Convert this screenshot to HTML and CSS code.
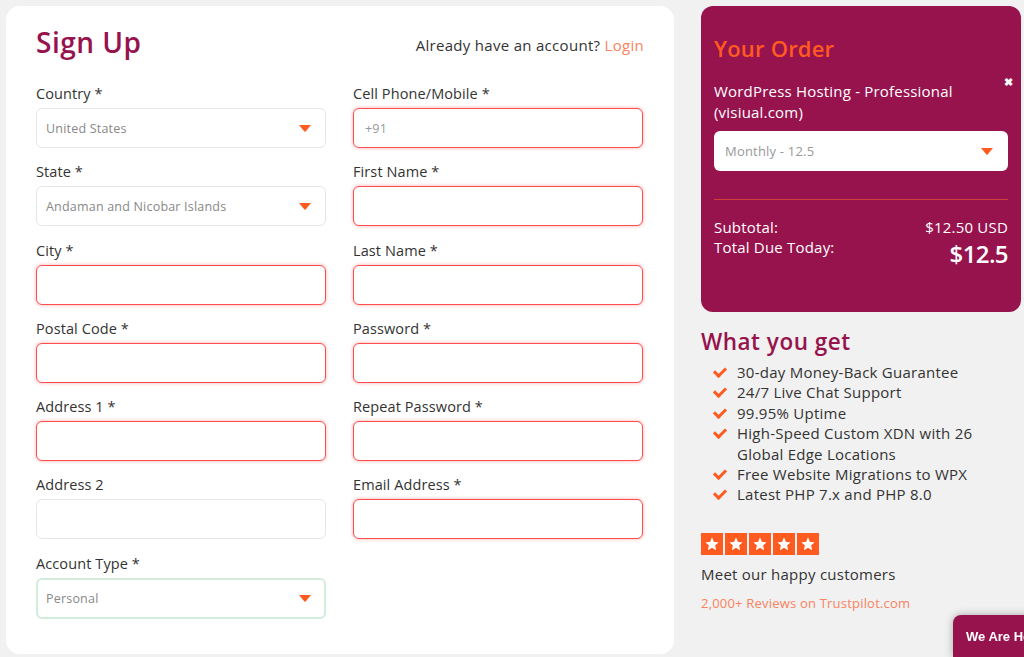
FILE: index.html
```html
<!DOCTYPE html>
<html lang="en">
<head>
    <meta charset="UTF-8">
    <meta name="viewport" content="width=device-width, initial-scale=1.0">
    <title>Sign Up - Checkout</title>
    <link rel="stylesheet" href="styles.css">
</head>
<body>
    <div class="page">
        <div class="signup-card">
            <div class="signup-head">
                <h1 class="signup-title">Sign Up</h1>
                <p class="have-account">Already have an account? <a href="#">Login</a></p>
            </div>

            <form class="form-grid">
                <div class="field">
                    <label>Country *</label>
                    <div class="select">
                        <select><option>United States</option></select>
                        <svg class="arrow" width="12" height="7" viewBox="0 0 12 7"><path d="M0 0h12L6.6 6.4a.8.8 0 0 1-1.2 0z" fill="#ff5a1f"/></svg>
                    </div>
                </div>
                <div class="field">
                    <label>Cell Phone/Mobile *</label>
                    <input class="error" type="text" placeholder="+91">
                </div>

                <div class="field">
                    <label>State *</label>
                    <div class="select">
                        <select><option>Andaman and Nicobar Islands</option></select>
                        <svg class="arrow" width="12" height="7" viewBox="0 0 12 7"><path d="M0 0h12L6.6 6.4a.8.8 0 0 1-1.2 0z" fill="#ff5a1f"/></svg>
                    </div>
                </div>
                <div class="field">
                    <label>First Name *</label>
                    <input class="error" type="text">
                </div>

                <div class="field">
                    <label>City *</label>
                    <input class="error" type="text">
                </div>
                <div class="field">
                    <label>Last Name *</label>
                    <input class="error" type="text">
                </div>

                <div class="field">
                    <label>Postal Code *</label>
                    <input class="error" type="text">
                </div>
                <div class="field">
                    <label>Password *</label>
                    <input class="error" type="password">
                </div>

                <div class="field">
                    <label>Address 1 *</label>
                    <input class="error" type="text">
                </div>
                <div class="field">
                    <label>Repeat Password *</label>
                    <input class="error" type="password">
                </div>

                <div class="field">
                    <label>Address 2</label>
                    <input type="text">
                </div>
                <div class="field">
                    <label>Email Address *</label>
                    <input class="error" type="email">
                </div>

                <div class="field">
                    <label>Account Type *</label>
                    <div class="select valid">
                        <select><option>Personal</option></select>
                        <svg class="arrow" width="12" height="7" viewBox="0 0 12 7"><path d="M0 0h12L6.6 6.4a.8.8 0 0 1-1.2 0z" fill="#ff5a1f"/></svg>
                    </div>
                </div>
            </form>
        </div>

        <div class="sidebar">
            <div class="order-box">
                <h2 class="order-title">Your Order</h2>
                <span class="remove">&#10006;</span>
                <p class="product-name">WordPress Hosting - Professional (visiual.com)</p>
                <div class="select">
                    <select><option>Monthly - 12.5</option></select>
                    <svg class="arrow" width="12" height="7" viewBox="0 0 12 7"><path d="M0 0h12L6.6 6.4a.8.8 0 0 1-1.2 0z" fill="#ff5a1f"/></svg>
                </div>
                <div class="totals">
                    <div class="total-row">
                        <span>Subtotal:</span>
                        <span>$12.50 USD</span>
                    </div>
                    <div class="total-row">
                        <span>Total Due Today:</span>
                        <span class="total-big">$12.5</span>
                    </div>
                </div>
            </div>

            <h2 class="get-title">What you get</h2>
            <ul class="get-list">
                <li>30-day Money-Back Guarantee</li>
                <li>24/7 Live Chat Support</li>
                <li>99.95% Uptime</li>
                <li>High-Speed Custom XDN with 26 Global Edge Locations</li>
                <li>Free Website Migrations to WPX</li>
                <li>Latest PHP 7.x and PHP 8.0</li>
            </ul>

            <div class="stars">
                <span class="star"><svg width="16" height="16" viewBox="0 0 24 24"><path d="M12 2l2.9 6.9 7.1.6-5.4 4.7 1.7 7.3L12 17.6 5.7 21.5l1.7-7.3L2 9.5l7.1-.6z" fill="#fff"/></svg></span>
                <span class="star"><svg width="16" height="16" viewBox="0 0 24 24"><path d="M12 2l2.9 6.9 7.1.6-5.4 4.7 1.7 7.3L12 17.6 5.7 21.5l1.7-7.3L2 9.5l7.1-.6z" fill="#fff"/></svg></span>
                <span class="star"><svg width="16" height="16" viewBox="0 0 24 24"><path d="M12 2l2.9 6.9 7.1.6-5.4 4.7 1.7 7.3L12 17.6 5.7 21.5l1.7-7.3L2 9.5l7.1-.6z" fill="#fff"/></svg></span>
                <span class="star"><svg width="16" height="16" viewBox="0 0 24 24"><path d="M12 2l2.9 6.9 7.1.6-5.4 4.7 1.7 7.3L12 17.6 5.7 21.5l1.7-7.3L2 9.5l7.1-.6z" fill="#fff"/></svg></span>
                <span class="star"><svg width="16" height="16" viewBox="0 0 24 24"><path d="M12 2l2.9 6.9 7.1.6-5.4 4.7 1.7 7.3L12 17.6 5.7 21.5l1.7-7.3L2 9.5l7.1-.6z" fill="#fff"/></svg></span>
            </div>
            <p class="happy">Meet our happy customers</p>
            <a class="reviews" href="#">2,000+ Reviews on Trustpilot.com</a>
        </div>
    </div>

    <div class="help-badge">We Are Here!</div>
</body>
</html>
```

FILE: styles.css
```css
body {
    margin: 0;
    background-color: #f1f1f1;
    font-family: "Open Sans", sans-serif;
    color: #333;
}

.page {
    display: flex;
    gap: 27px;
    padding: 6px 3px 0 6px;
}

/* sign up card */
.signup-card {
    width: 668px;
    height: 648px;
    box-sizing: border-box;
    background: #fff;
    border-radius: 14px;
    padding: 19px 30px 0;
}

.signup-head {
    display: flex;
    justify-content: space-between;
    align-items: center;
    height: 34px;
    margin-bottom: 25px;
}

.signup-title {
    margin: 0;
    font-size: 28px;
    font-weight: 600;
    line-height: 34px;
    letter-spacing: 0.5px;
    color: #96134d;
}

.have-account {
    margin: 6px 0 0;
    font-size: 15px;
    letter-spacing: 0.3px;
}

.have-account a {
    color: #f7835f;
    text-decoration: none;
}

.form-grid {
    display: grid;
    grid-template-columns: 290px 290px;
    column-gap: 27px;
    row-gap: 14.3px;
}

.field label {
    display: block;
    font-size: 14.5px;
    line-height: 20px;
    letter-spacing: 0.1px;
    margin-bottom: 4px;
}

.field input,
.select select {
    display: block;
    width: 100%;
    height: 40px;
    box-sizing: border-box;
    border: 1px solid #e6e6e6;
    border-radius: 6px;
    padding: 0 11px;
    font-family: inherit;
    font-size: 12.5px;
    letter-spacing: 0.2px;
    color: #888;
    background: #fff;
    outline: none;
}

.field input::placeholder {
    color: #999;
}

.field input.error {
    border: 1.5px solid #ff4d4d;
    box-shadow: 0 0 3px 1px rgba(255, 77, 77, 0.28);
}

.select {
    position: relative;
}

.select select {
    appearance: none;
    -webkit-appearance: none;
    padding-left: 9px;
}

.select .arrow {
    position: absolute;
    right: 15px;
    top: 17px;
}

.select.valid select {
    height: 41px;
    border: 2px solid #d3ebd9;
    padding-left: 8px;
}

/* sidebar */
.sidebar {
    width: 320px;
}

.order-box {
    position: relative;
    background: #97134e;
    border-radius: 12px;
    height: 306px;
    box-sizing: border-box;
    padding: 28px 13px 0;
    color: #fff;
}

.order-title {
    margin: 0;
    font-size: 22px;
    font-weight: 600;
    line-height: 28px;
    letter-spacing: 0.2px;
    color: #ff5a1f;
}

.remove {
    position: absolute;
    top: 68px;
    right: 8px;
    font-size: 11px;
    font-weight: bold;
}

.product-name {
    margin: 19px 0 8px;
    font-size: 15px;
    line-height: 21px;
    letter-spacing: 0.2px;
}

.order-box .select select {
    border: none;
    color: #999;
    font-size: 13px;
    padding-left: 11px;
}

.totals {
    margin-top: 28px;
    border-top: 1px solid #d0403f;
    padding-top: 17px;
    font-size: 15px;
    letter-spacing: 0.2px;
}

.total-row {
    display: flex;
    justify-content: space-between;
    align-items: flex-start;
    line-height: 20px;
}

.total-big {
    font-size: 24px;
    font-weight: 600;
    line-height: 30px;
    letter-spacing: -0.6px;
    word-spacing: -2px;
    margin-top: 2px;
}

.get-title {
    margin: 16px 0 6px;
    font-size: 22.5px;
    font-weight: 600;
    line-height: 28px;
    letter-spacing: 0.5px;
    color: #96134d;
}

.get-list {
    list-style: none;
    margin: 0;
    padding: 0 0 0 36px;
    font-size: 15px;
    line-height: 20.4px;
    letter-spacing: 0.25px;
}

.get-list li {
    position: relative;
}

.get-list li::before {
    content: "";
    position: absolute;
    left: -23px;
    top: 5px;
    width: 9px;
    height: 5px;
    border-left: 3px solid #ff5a1f;
    border-bottom: 3px solid #ff5a1f;
    transform: rotate(-45deg);
}

.stars {
    display: flex;
    gap: 2px;
    margin-top: 28px;
}

.star {
    width: 22px;
    height: 22px;
    background: #ff5a1f;
    display: flex;
    align-items: center;
    justify-content: center;
}

.happy {
    margin: 9px 0 0;
    font-size: 15px;
    line-height: 20px;
    letter-spacing: 0.25px;
}

.reviews {
    display: block;
    margin-top: 10px;
    font-size: 13px;
    line-height: 18px;
    letter-spacing: 0.2px;
    color: #f7835f;
    text-decoration: none;
}

.help-badge {
    position: fixed;
    left: 953px;
    bottom: 0;
    height: 42px;
    line-height: 44px;
    padding: 0 13px;
    background: #97134e;
    border-radius: 8px 8px 0 0;
    box-shadow: 0 0 8px rgba(0, 0, 0, 0.3);
    color: #fff;
    font-family: "Liberation Sans", Arial, sans-serif;
    font-weight: bold;
    font-size: 13px;
    white-space: nowrap;
}
```
